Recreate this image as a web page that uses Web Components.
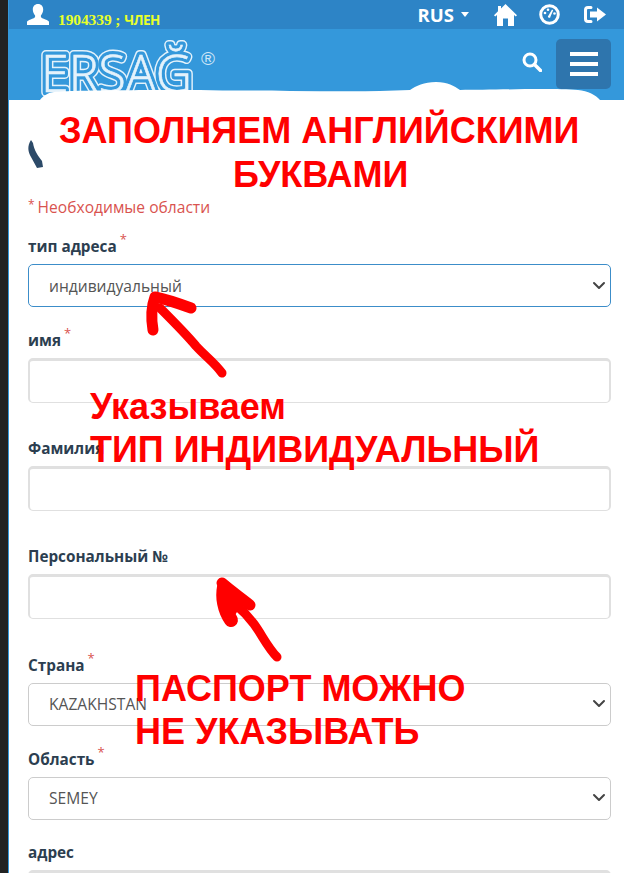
<!DOCTYPE html>
<html lang="ru">
<head>
<meta charset="utf-8">
<title>Ersag</title>
<style>
  html, body { margin: 0; height: 873px; overflow: hidden; background: #fff; }
  body { font-family: "Open Sans", sans-serif; }
</style>
</head>
<body>
<app-page>
  <top-bar slot="top"></top-bar>
  <main-header slot="top"></main-header>
  <address-form>
    <form-field label="тип адреса" required type="select" value="индивидуальный" focused></form-field>
    <form-field label="имя" required type="input"></form-field>
    <form-field label="Фамилия" type="input"></form-field>
    <form-field label="Персональный №" type="input"></form-field>
    <form-field label="Страна" required type="select" value="KAZAKHSTAN"></form-field>
    <form-field label="Область" required type="select" value="SEMEY"></form-field>
    <form-field label="адрес" type="input"></form-field>
  </address-form>
  <note-layer slot="over"></note-layer>
</app-page>

<script>
class AppPage extends HTMLElement {
  constructor() {
    super();
    this.attachShadow({ mode: "open" });
    this.shadowRoot.innerHTML = `
      <style>
        :host {
          display: flex;
          position: relative;
          width: 624px;
          height: 873px;
          overflow: hidden;
        }
        .strip {
          width: 8px;
          flex: none;
          background: #222;
        }
        .main {
          flex: 1;
          min-width: 0;
          border-left: 1px solid #3498db;
        }
      </style>
      <div class="strip"></div>
      <div class="main">
        <slot name="top"></slot>
        <slot></slot>
      </div>
      <slot name="over"></slot>
    `;
  }
}

class TopBar extends HTMLElement {
  constructor() {
    super();
    this.attachShadow({ mode: "open" });
    this.shadowRoot.innerHTML = `
      <style>
        :host {
          display: flex;
          align-items: center;
          height: 29px;
          box-sizing: border-box;
          padding: 0 18px 0 18px;
          background: #2d84c6;
          color: #fff;
        }
        .user {
          display: block;
          margin-right: 9px;
        }
        .who {
          font: bold 15.500px "Liberation Serif", serif;
          letter-spacing: -0.1px;
          color: #e8ff2a;
          margin-top: 11px;
          white-space: nowrap;
        }
        .who b {
          font: bold 13.500px "Open Sans", sans-serif;
          letter-spacing: -0.5px;
        }
        .lang {
          margin-left: auto;
          font: 700 18.500px "Open Sans", sans-serif;
          display: flex;
          align-items: center;
          gap: 7px;
          margin-top: -1px;
        }
        .caret {
          width: 0;
          height: 0;
          border: 4.500px solid transparent;
          border-top: 5px solid #fff;
          border-bottom: 0;
        }
        svg { display: block; fill: #fff; }
        .home { margin-left: 25px; }
        .dash { margin-left: 22px; }
        .out { margin-left: 23px; }
      </style>
      <svg class="user" width="22" height="21" viewBox="0 0 22 21">
        <path d="M11 0c3.300 0 5.200 2.400 5.200 5.600 0 2.400-1 4.600-2.300 5.800v1.300c0 1 2.200 1.800 4.500 2.700 2 .8 3.600 1.500 3.600 2.600V21H0v-3c0-1.100 1.600-1.800 3.600-2.600 2.300-.9 4.500-1.700 4.500-2.700v-1.300C6.800 10.200 5.800 8 5.800 5.600 5.800 2.400 7.700 0 11 0z"/>
      </svg>
      <span class="who">1904339 ; <b>ЧЛЕН</b></span>
      <span class="lang">RUS <i class="caret"></i></span>
      <svg class="home" width="23" height="22" viewBox="0 0 23 22">
        <path d="M11.500 0 23 11.200 21.800 12.500 20 11v11h-6v-7.500H9V22H3V11l-1.800 1.500L0 11.200 4 7.300V2h3v2.400z"/>
      </svg>
      <svg class="dash" width="21" height="21" viewBox="0 0 21 21">
        <circle cx="10.500" cy="10.500" r="8.800" fill="none" stroke="#fff" stroke-width="3"/>
        <path d="M9.500 11.500 13 5.500l1.200.7-2.700 6.300a1.300 1.300 0 1 1-2-1z"/>
        <circle cx="6" cy="9" r="1.300"/><circle cx="9" cy="5.800" r="1.300"/><circle cx="15.500" cy="9.500" r="1.300"/>
      </svg>
      <svg class="out" width="23" height="19" viewBox="0 0 23 19">
        <path d="M8 2.500H5C3.600 2.500 2.500 3.600 2.500 5v9c0 1.400 1.100 2.500 2.500 2.500h3" fill="none" stroke="#fff" stroke-width="3" stroke-linecap="round"/>
        <path d="M14 2.500 23 9.500l-9 7v-4H7v-6h7z"/>
      </svg>
    `;
  }
}

class MainHeader extends HTMLElement {
  constructor() {
    super();
    this.attachShadow({ mode: "open" });
    this.shadowRoot.innerHTML = `
      <style>
        :host {
          display: flex;
          align-items: flex-start;
          height: 71px;
          box-sizing: border-box;
          padding: 10px 13px 0 29px;
          background: #3498db;
        }
        .logo { display: block; margin-top: -1px; }
        .mark {
          font: 300 52px "Open Sans", sans-serif;
        }
        .reg {
          font: 19px "Liberation Sans", sans-serif;
          fill: #cfe6f7;
        }
        .search {
          display: block;
          margin: 13px 14px 0 auto;
          fill: none;
          stroke: #fff;
        }
        .menu {
          display: flex;
          flex-direction: column;
          justify-content: center;
          align-items: center;
          gap: 6px;
          width: 55px;
          height: 50px;
          border-radius: 5px;
          background: #2e75ad;
        }
        .menu i {
          display: block;
          width: 28px;
          height: 4px;
          background: #fff;
        }
      </style>
      <svg class="logo" width="190" height="60" viewBox="0 0 190 60">
        <defs>
          <text id="ersag" class="mark" x="3" y="54" textLength="151" lengthAdjust="spacingAndGlyphs">ERSAĞ</text>
        </defs>
        <use href="#ersag" fill="#e4f2fb" stroke="#e4f2fb" stroke-width="10" stroke-linejoin="round"/>
        <use href="#ersag" fill="#3498db" stroke="#3498db" stroke-width="7" stroke-linejoin="round"/>
        <use href="#ersag" fill="#e4f2fb" stroke="#e4f2fb" stroke-width="0.600"/>
        <text class="reg" x="163" y="27">®</text>
      </svg>
      <svg class="search" width="20" height="20" viewBox="0 0 20 20">
        <circle cx="8" cy="8" r="6" stroke-width="3"/>
        <path d="m12.500 12.500 6 6" stroke-width="3.500" stroke-linecap="round"/>
      </svg>
      <div class="menu"><i></i><i></i><i></i></div>
    `;
  }
}

class AddressForm extends HTMLElement {
  constructor() {
    super();
    this.attachShadow({ mode: "open" });
    this.shadowRoot.innerHTML = `
      <style>
        :host {
          display: block;
          padding: 97px 13px 0 19px;
          background: #fff;
        }
        .req {
          font-size: 15.600px;
          line-height: 20px;
          color: #d9534f;
          margin-bottom: 19px;
        }
        sup {
          font-size: 12px;
          line-height: 0;
          vertical-align: 4px;
          margin-right: 3px;
        }
      </style>
      <div class="req"><sup>*</sup>Необходимые области</div>
      <slot></slot>
    `;
  }
}

class FormField extends HTMLElement {
  constructor() {
    super();
    this.attachShadow({ mode: "open" });
  }

  connectedCallback() {
    const isSelect = this.getAttribute("type") === "select";
    const label = this.getAttribute("label") || "";
    const required = this.hasAttribute("required");
    const value = this.getAttribute("value") || "";
    this.shadowRoot.innerHTML = `
      <style>
        :host {
          display: block;
          margin-bottom: ${isSelect ? 22.7 : 35.4}px;
        }
        .label {
          display: block;
          font: 700 15.300px/20px "Open Sans", sans-serif;
          color: #2c3e50;
          margin-bottom: 8px;
        }
        .label i {
          font-style: normal;
          font-weight: 400;
          color: #d9534f;
          font-size: 13px;
          vertical-align: 8px;
          line-height: 0;
          margin-left: 3px;
        }
        .control {
          position: relative;
          height: ${isSelect ? 43 : 45}px;
        }
        select, input {
          display: block;
          width: 100%;
          height: 100%;
          box-sizing: border-box;
          border: 1px solid #ccc;
          border-radius: 5px;
          background: #fff;
          color: #555;
          font: 15.600px "Open Sans", sans-serif;
          outline: none;
          appearance: none;
          margin: 0;
        }
        select { padding: 0 20px; }
        input { border: 2px solid #e0e0e0; border-top-width: 3px; border-bottom-width: 1.500px; }
        :host([focused]) select { border-color: #3c8dc9; }
        .chev {
          position: absolute;
          right: 5px;
          top: 50%;
          margin-top: -5px;
          fill: none;
          stroke: #444;
          stroke-width: 2;
          stroke-linecap: round;
          stroke-linejoin: round;
          pointer-events: none;
        }
      </style>
      <label class="label" for="c">${label}${required ? "<i>*</i>" : ""}</label>
      <div class="control">
        ${isSelect
          ? `<select id="c"><option>${value}</option></select>
             <svg class="chev" width="14" height="10" viewBox="0 0 14 10"><path d="m2 2 5 5 5-5"/></svg>`
          : `<input id="c" type="text">`}
      </div>
    `;
  }
}

class NoteLayer extends HTMLElement {
  constructor() {
    super();
    this.attachShadow({ mode: "open" });
    this.shadowRoot.innerHTML = `
      <style>
        :host {
          position: absolute;
          inset: 0;
          display: block;
          pointer-events: none;
        }
        svg { position: absolute; left: 0; top: 0; }
        .note {
          position: absolute;
          font: bold 36px/44px "Liberation Sans", sans-serif;
          color: #f00;
          white-space: nowrap;
        }
      </style>
      <svg width="624" height="873" viewBox="0 0 624 873">
        <path fill="#fff" d="M40 100c3-4 7-7 14-8 20-2 100-2 146-2 30 1 60 0 90 1 40 0 80 1 120-1 6-4 14-8 26-8 12 0 18 4 24 8 30 0 90-2 118 0 10 1 18 5 22 10v90H46c-2-20-3-50-6-90z"/>
        <path fill="#2c4a68" d="M31 140C27 146 28 152 31 157L37 168 43 167 42 161C38 156 34 150 33 143Z"/>
        <g fill="none" stroke="#f00" stroke-linecap="round" stroke-linejoin="round">
          <path stroke-width="9" d="M222 373C214 362 205 356 196 346 186 334 172 320 160 308"/>
          <path stroke-width="11" d="M153 330C151 318 152 305 155 297 165 299 180 304 191 308"/>
          <path stroke-width="11" d="M222 583C230 590 240 597 250 605"/>
          <path stroke-width="14" d="M224 587C222 597 224 610 231 620"/>
          <path stroke-width="9" d="M277 657C268 648 262 635 254 624 248 616 242 610 236 605"/>
        </g>
        <path fill="#f00" d="M222 583 242 604 232 620 224 600z"/>
      </svg>
      <div class="note" style="left:59px;top:109px">ЗАПОЛНЯЕМ АНГЛИЙСКИМИ</div>
      <div class="note" style="left:233px;top:153px">БУКВАМИ</div>
      <div class="note" style="left:90px;top:385px">Указываем</div>
      <div class="note" style="left:90px;top:428px">ТИП ИНДИВИДУАЛЬНЫЙ</div>
      <div class="note" style="left:135px;top:667px">ПАСПОРТ МОЖНО</div>
      <div class="note" style="left:135px;top:710px">НЕ УКАЗЫВАТЬ</div>
    `;
  }
}

customElements.define("app-page", AppPage);
customElements.define("top-bar", TopBar);
customElements.define("main-header", MainHeader);
customElements.define("address-form", AddressForm);
customElements.define("form-field", FormField);
customElements.define("note-layer", NoteLayer);
</script>
</body>
</html>
